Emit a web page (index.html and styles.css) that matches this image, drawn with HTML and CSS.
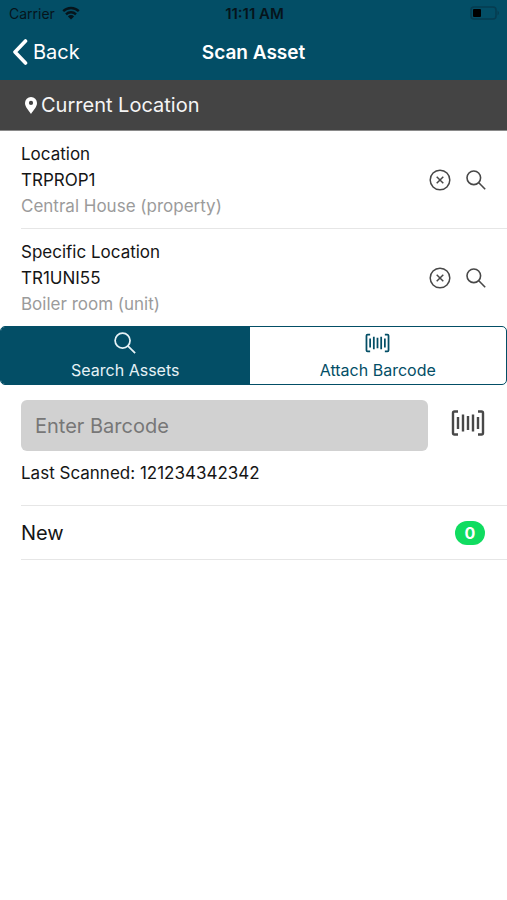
FILE: index.html
```
<!DOCTYPE html>
<html lang="en">
<head>
<meta charset="utf-8">
<meta name="viewport" content="width=device-width, initial-scale=1">
<title>Scan Asset</title>
<link rel="stylesheet" href="styles.css">
</head>
<body>
<svg class="symbols" aria-hidden="true">
  <symbol id="search" viewBox="0 0 20 20"><circle cx="7.8" cy="7.8" r="6.8"/><path d="M12.8 12.8L19.2 19.2"/></symbol>
  <symbol id="clear" viewBox="0 0 22 22"><circle cx="11" cy="11" r="9.8"/><path d="M7.7 7.7l6.6 6.6M14.3 7.7l-6.6 6.6"/></symbol>
  <symbol id="barcode" viewBox="0 0 34 26"><path d="M7 1.5H3.500q-1.500 0-1.500 1.500v20q0 1.500 1.500 1.500H7M27 1.500h3.500q1.500 0 1.500 1.500v20q0 1.500-1.500 1.500H27M7 7v12M12 4.500v17M17 6v14M22 4.500v17M27 7v12"/></symbol>
</svg>
<header class="top">
  <div class="status">
    <span class="carrier">Carrier
      <svg class="wifi" viewBox="0 0 18 14" aria-hidden="true"><path class="arc" d="M1.2 5.2a11.2 11.2 0 0 1 15.6 0M4 8.3a7.2 7.2 0 0 1 10 0"/><path d="M9 13.5L5.9 10.4a4.4 4.4 0 0 1 6.2 0z"/></svg>
    </span>
    <span class="clock">11:11 AM</span>
    <svg class="battery" viewBox="0 0 30 14" aria-hidden="true"><rect class="shell" x="1" y="1" width="25" height="12" rx="3"/><path class="tip" d="M27.5 4.5q3 2.500 0 5z"/><rect x="3" y="3" width="8" height="8" rx="1"/></svg>
  </div>
  <nav class="nav">
    <button class="back" type="button"><svg viewBox="0 0 16 26" aria-hidden="true"><path d="M13.500 2L3 13l10.500 11"/></svg>Back</button>
    <h1>Scan Asset</h1>
  </nav>
</header>
<main>
  <h2 class="section"><svg viewBox="0 0 12 17" aria-hidden="true"><path fill-rule="evenodd" d="M6 0a6 6 0 0 1 6 6c0 4-3.500 7-6 11C3.500 13 0 10 0 6a6 6 0 0 1 6-6zm0 3.800a2.100 2.100 0 1 0 0 4.200a2.100 2.100 0 0 0 0-4.200z"/></svg>Current Location</h2>
  <section class="item">
    <div class="lines"><p>Location</p><p>TRPROP1</p><p class="muted">Central House (property)</p></div>
    <button class="icon" type="button" aria-label="Clear location"><svg class="i-clear"><use href="#clear"/></svg></button>
    <button class="icon" type="button" aria-label="Search location"><svg class="i-search"><use href="#search"/></svg></button>
  </section>
  <section class="item">
    <div class="lines"><p>Specific Location</p><p>TR1UNI55</p><p class="muted">Boiler room (unit)</p></div>
    <button class="icon" type="button" aria-label="Clear specific location"><svg class="i-clear"><use href="#clear"/></svg></button>
    <button class="icon" type="button" aria-label="Search specific location"><svg class="i-search"><use href="#search"/></svg></button>
  </section>
  <div class="segments">
    <button class="segment active" type="button"><svg class="i-find"><use href="#search"/></svg>Search Assets</button>
    <button class="segment" type="button"><svg class="i-attach"><use href="#barcode"/></svg>Attach Barcode</button>
  </div>
  <div class="entry">
    <input type="text" aria-label="Enter Barcode" placeholder="Enter Barcode">
    <button class="icon" type="button" aria-label="Scan barcode"><svg class="i-scan"><use href="#barcode"/></svg></button>
  </div>
  <p class="last">Last Scanned: 121234342342</p>
  <div class="new"><span>New</span><span class="badge">0</span></div>
</main>
</body>
</html>
```

FILE: styles.css
```
* { box-sizing: border-box; }

body {
  margin: 0;
  background: #fff;
  color: #151515;
  font-family: Inter, "Liberation Sans", sans-serif;
  font-size: 17px;
}

h1, h2, p { margin: 0; font-weight: 400; }

button {
  margin: 0;
  padding: 0;
  border: 0;
  background: none;
  color: inherit;
  font: inherit;
}

svg { display: block; fill: none; stroke: currentColor; }
.symbols { position: absolute; width: 0; height: 0; }

.top { background: #034e66; }

.status {
  display: grid;
  grid-template-columns: 1fr auto 1fr;
  align-items: center;
  height: 26px;
  padding: 0 7px 0 9px;
  color: #06141b;
  font-size: 14px;
}

.carrier { display: flex; align-items: center; gap: 7px; }
.clock { font-size: 15px; font-weight: 600; }
.wifi { width: 18px; height: 14px; fill: currentColor; stroke: none; }
.wifi .arc { fill: none; stroke: currentColor; stroke-width: 2.4; }
.battery { width: 30px; height: 14px; justify-self: end; fill: #000; stroke: none; }
.battery .shell { fill: none; stroke: #063c50; stroke-width: 1.5; }
.battery .tip { fill: #063c50; }

.nav {
  display: grid;
  grid-template-columns: 1fr auto 1fr;
  align-items: center;
  height: 54px;
  padding: 0 12px 2px;
  color: #fff;
}

.nav h1 { font-size: 19px; font-weight: 600; }
.back { display: flex; align-items: center; gap: 5px; font-size: 20px; }
.back svg { width: 16px; height: 26px; stroke-width: 3.6; stroke-linecap: round; stroke-linejoin: round; }

.section {
  display: flex;
  align-items: center;
  gap: 4px;
  height: 51px;
  padding-left: 25px;
  border-bottom: 1px solid #8a8a8a;
  background: #444;
  color: #f5f5f5;
  font-size: 20px;
}

.section svg { width: 12px; height: 17px; fill: #fff; stroke: none; }

.item {
  display: flex;
  align-items: center;
  gap: 15px;
  margin-left: 21px;
  padding: 10px 21px 9px 0;
}

.item + .item { border-top: 1px solid #e6e6e6; }
.lines { flex: 1; line-height: 26px; }
.muted { color: #9b9b9b; }
.icon { color: #484848; }
.i-clear { width: 22px; height: 22px; stroke-width: 1.5; }
.i-search { width: 20px; height: 20px; stroke-width: 1.6; }

.segments {
  display: flex;
  overflow: hidden;
  height: 59px;
  border: 1px solid #034e66;
  border-radius: 5px;
}

.segment {
  flex: 1 1 257px;
  display: flex;
  flex-direction: column;
  align-items: center;
  gap: 3px;
  padding-top: 4px;
  color: #034e66;
  font-size: 16px;
  line-height: 24px;
}

.segment.active { flex-basis: 249px; background: #034e66; color: #e6f2f6; }
.segment svg { height: 24px; }
.i-find { width: 24px; padding: 1px; stroke-width: 1.6; }
.i-attach { width: 25px; stroke-width: 2.4; }

.entry {
  display: flex;
  align-items: center;
  gap: 23px;
  padding: 15px 22px 0 21px;
}

.entry input {
  flex: 1;
  min-width: 0;
  height: 51px;
  padding: 0 14px;
  border: 0;
  border-radius: 6px;
  background: #d1d1d1;
  color: #151515;
  font: inherit;
  font-size: 20px;
}

.entry input::placeholder { color: #777; opacity: 1; }
.entry .icon { padding-bottom: 6px; }
.i-scan { width: 34px; height: 26px; stroke-width: 2.4; }

.last { padding: 9px 21px 19px; line-height: 26px; }

.new {
  display: flex;
  align-items: center;
  justify-content: space-between;
  height: 55px;
  margin-left: 21px;
  padding-right: 22px;
  border-top: 1px solid #e6e6e6;
  border-bottom: 1px solid #e6e6e6;
  font-size: 20px;
}

.badge {
  min-width: 30px;
  border-radius: 12px;
  background: #10dc60;
  color: #fff;
  font-size: 16px;
  font-weight: 700;
  line-height: 24px;
  text-align: center;
}
```
